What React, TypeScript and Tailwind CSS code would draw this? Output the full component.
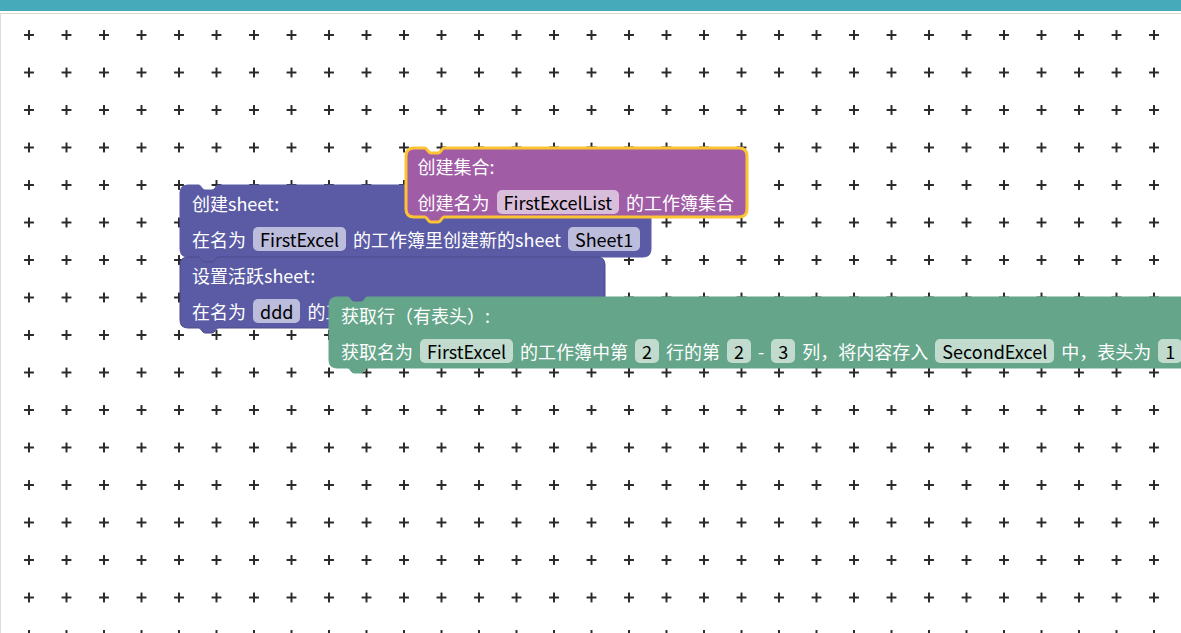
import React from "react";

const FONT = { fontFamily: '"Noto Sans CJK SC", "Noto Sans", sans-serif' };

// block outline with the top notch and the bottom tab
function blockPath(w: number, h: number) {
  const r = 8;
  return [
    `M ${r},0`,
    `L 19,0 C 21,0 22,5 25,5 L 32,5 C 35,5 36,0 38,0`,
    `L ${w - r},0 Q ${w},0 ${w},${r}`,
    `L ${w},${h - r} Q ${w},${h} ${w - r},${h}`,
    `L 38,${h} C 36,${h} 35,${h + 5} 32,${h + 5} L 25,${h + 5} C 22,${h + 5} 21,${h} 19,${h}`,
    `L ${r},${h} Q 0,${h} 0,${h - r}`,
    `L 0,${r} Q 0,0 ${r},0 Z`,
  ].join(" ");
}

type Part = string | { field: string };

function Field({ text, pill }: { text: string; pill: string }) {
  return (
    <span className={`h-[24px] px-[7px] rounded-[5px] flex items-center text-black ${pill}`}>
      {text}
    </span>
  );
}

function Block({
  x,
  y,
  w,
  h,
  fill,
  stroke,
  strokeWidth = 1,
  pill,
  title,
  line,
}: {
  x: number;
  y: number;
  w: number;
  h: number;
  fill: string;
  stroke: string;
  strokeWidth?: number;
  pill: string;
  title: string;
  line: Part[];
}) {
  return (
    <div className="absolute overflow-visible" style={{ left: x, top: y, width: w, height: h }}>
      <svg className="absolute left-0 top-0 overflow-visible" width={w} height={h + 6}>
        <path d={blockPath(w, h)} fill={fill} stroke={stroke} strokeWidth={strokeWidth} />
      </svg>
      <div className="relative flex flex-col text-white text-[18px] leading-none whitespace-nowrap">
        <div className="h-[36px] pl-[12px] flex items-center">{title}</div>
        <div className="h-[36px] pl-[12px] flex items-center gap-[7px]">
          {line.map((p, i) =>
            typeof p === "string" ? (
              <span key={i}>{p}</span>
            ) : (
              <Field key={i} text={p.field} pill={pill} />
            )
          )}
        </div>
      </div>
    </div>
  );
}

function Grid() {
  return (
    <svg className="absolute inset-0" width="100%" height="100%">
      <defs>
        <pattern id="grid" x="9.25" y="2.25" width="37.5" height="37.5" patternUnits="userSpaceOnUse">
          <path d="M 14.25 18.75 H 23.25 M 18.75 14.25 V 23.25" stroke="#2a2a2a" strokeWidth="1" shapeRendering="crispEdges" />
        </pattern>
      </defs>
      <rect width="100%" height="100%" fill="url(#grid)" />
    </svg>
  );
}

export default function App() {
  return (
    <div className="w-[1181px] h-[633px] bg-white overflow-hidden flex flex-col" style={FONT}>
      <div className="h-[11px] bg-[#47aabb] shrink-0" />
      <div className="h-[2px] shrink-0" />
      <div className="h-[1px] bg-[#d8d8d0] shrink-0" />
      <div className="relative flex-1 border-l border-[#dcdcdc] overflow-hidden">
        <Grid />
        {/* workspace canvas, offsets measured from the page top */}
        <div className="absolute left-[-1px] top-[-14px]">
          <Block
            x={180}
            y={185}
            w={471}
            h={72}
            fill="#5b5ba5"
            stroke="#5b5ba5"
            pill="bg-[#bcbcdd]"
            title="创建sheet:"
            line={["在名为", { field: "FirstExcel" }, "的工作簿里创建新的sheet", { field: "Sheet1" }]}
          />
          <Block
            x={180}
            y={257}
            w={425}
            h={71}
            fill="#5b5ba5"
            stroke="#4a4a8c"
            pill="bg-[#bcbcdd]"
            title="设置活跃sheet:"
            line={["在名为", { field: "ddd" }, "的工"]}
          />
          <Block
            x={405.5}
            y={147.5}
            w={341}
            h={69}
            fill="#a05ca5"
            stroke="#fcc434"
            strokeWidth={3}
            pill="bg-[#d9bedb]"
            title="创建集合:"
            line={["创建名为", { field: "FirstExcelList" }, "的工作簿集合"]}
          />
          <Block
            x={329}
            y={297}
            w={960}
            h={71}
            fill="#65a58a"
            stroke="#65a58a"
            pill="bg-[#c1dccf]"
            title="获取行（有表头）:"
            line={[
              "获取名为",
              { field: "FirstExcel" },
              "的工作簿中第",
              { field: "2" },
              "行的第",
              { field: "2" },
              "-",
              { field: "3" },
              "列，将内容存入",
              { field: "SecondExcel" },
              "中，表头为",
              { field: "1" },
            ]}
          />
        </div>
      </div>
    </div>
  );
}
